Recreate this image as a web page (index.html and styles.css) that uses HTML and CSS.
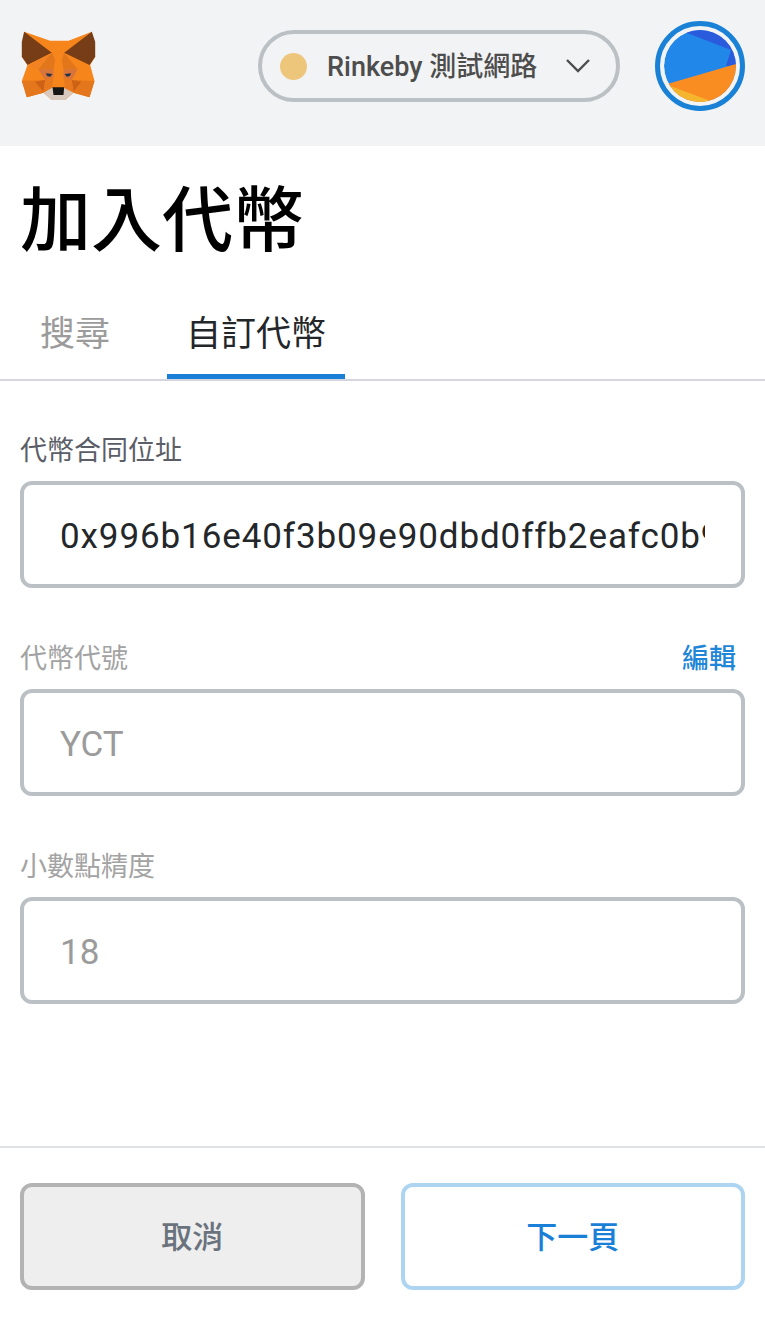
FILE: index.html
```html
<!DOCTYPE html>
<html lang="zh-Hant">
<head>
    <title>加入代幣</title>
    <meta charset="UTF-8">
    <meta name="viewport" content="width=device-width, initial-scale=1.0">
    <link rel="stylesheet" href="styles.css">
</head>
<body>
    <div class="app">
        <div class="app-header">
            <svg class="fox" viewBox="60 90 230 216" width="77" height="72">
                <polygon points="72,95 150,122 205,122 275,95 285,170 270,195 283,243 268,292 220,278 195,300 155,300 130,278 80,292 65,243 82,195 65,170" fill="#f6851b"/>
                <polygon points="72,95 155,158 82,195 65,170 65,125" fill="#763d16"/>
                <polygon points="275,95 192,158 268,195 285,170 285,125" fill="#763d16"/>
                <polygon points="150,122 155,158 115,208 82,195 155,158" fill="#f28222"/>
                <polygon points="155,158 165,180 160,208 115,208" fill="#e2761b"/>
                <polygon points="192,158 185,180 190,208 232,208" fill="#e2761b"/>
                <polygon points="115,208 160,208 160,232 135,240" fill="#d9743a"/>
                <polygon points="232,208 190,208 190,232 215,240" fill="#d9743a"/>
                <polygon points="65,243 135,240 130,278 80,292" fill="#e4761b"/>
                <polygon points="283,243 215,240 220,278 268,292" fill="#e4761b"/>
                <polygon points="105,245 135,240 130,275" fill="#cd6116"/>
                <polygon points="243,245 215,240 220,275" fill="#cd6116"/>
                <polygon points="135,240 160,232 155,265 130,278" fill="#e8791f"/>
                <polygon points="215,240 190,232 195,265 220,278" fill="#e8791f"/>
                <polygon points="137,220 157,222 150,230 141,228" fill="#233447"/>
                <polygon points="213,220 193,222 200,230 209,228" fill="#233447"/>
                <polygon points="155,264 130,278 155,300 195,300 220,278 192,264" fill="#d7c9bd"/>
                <polygon points="157,262 192,262 190,285 160,285" fill="#161616"/>
            </svg>
            <div class="network-pill">
                <span class="network-dot"></span>
                <span class="network-name">Rinkeby 測試網路</span>
                <svg class="caret" viewBox="0 0 26 16" width="26" height="16">
                    <path d="M2 2 L13 13 L24 2" fill="none" stroke="#4d4d4d" stroke-width="2.4"/>
                </svg>
            </div>
            <div class="account-ring">
                <svg class="account-icon" viewBox="0 0 72 72" width="72" height="72">
                    <circle cx="36" cy="36" r="36" fill="#2188ea"/>
                    <polygon points="23,3 23,0 72,0 72,35 62,36 67,20" fill="#2a5bdc"/>
                    <polygon points="0,55 72,34 72,72 0,72" fill="#fa8d22"/>
                    <polygon points="6,56 44,70 44,72 6,72" fill="#f5b52e"/>
                </svg>
            </div>
        </div>

        <div class="page-title">加入代幣</div>

        <div class="tabs">
            <div class="tab">搜尋</div>
            <div class="tab tab-active">自訂代幣</div>
        </div>

        <form class="token-form">
            <div class="field">
                <div class="field-label">
                    <span>代幣合同位址</span>
                </div>
                <input class="field-input field-address" type="text" value="0x996b16e40f3b09e90dbd0ffb2eafc0b9c1d2e3f4">
            </div>
            <div class="field">
                <div class="field-label muted">
                    <span>代幣代號</span>
                    <a class="edit-link">編輯</a>
                </div>
                <input class="field-input" type="text" value="YCT" disabled>
            </div>
            <div class="field">
                <div class="field-label muted">
                    <span>小數點精度</span>
                </div>
                <input class="field-input" type="text" value="18" disabled>
            </div>
        </form>

        <div class="app-footer">
            <button class="btn btn-cancel" type="button">取消</button>
            <button class="btn btn-next" type="button">下一頁</button>
        </div>
    </div>
</body>
</html>
```

FILE: styles.css
```css
* {
    box-sizing: border-box;
}

body {
    margin: 0;
    background-color: #FFFFFF;
    font-family: Roboto, "Noto Sans CJK TC", sans-serif;
}

.app {
    display: flex;
    flex-direction: column;
    height: 1322px;
    overflow: hidden;
}

.app-header {
    display: flex;
    align-items: center;
    height: 146px;
    padding: 0 20px;
    background-color: #F2F3F4;
}

.fox {
    margin-top: -14px;
    flex-shrink: 0;
}

.network-pill {
    display: flex;
    align-items: center;
    width: 362px;
    height: 72px;
    margin-left: 161px;
    margin-top: -14px;
    padding: 0 25px 0 18px;
    border: 4px solid #BBC0C5;
    border-radius: 36px;
}

.network-dot {
    width: 27px;
    height: 27px;
    border-radius: 50%;
    background-color: #EDC67C;
    flex-shrink: 0;
}

.network-name {
    margin-left: 20px;
    padding-bottom: 4px;
    font-size: 27px;
    font-weight: 500;
    color: #4D4D4D;
    white-space: nowrap;
}

.caret {
    margin-left: auto;
    flex-shrink: 0;
}

.account-ring {
    display: flex;
    align-items: center;
    justify-content: center;
    width: 90px;
    height: 90px;
    margin-left: 35px;
    margin-top: -14px;
    border: 5px solid #1A82D6;
    border-radius: 50%;
    flex-shrink: 0;
}

.account-icon {
    border-radius: 50%;
}

.page-title {
    height: 132px;
    padding: 33px 0 0 20px;
    font-size: 71px;
    line-height: 84px;
    font-weight: 500;
    color: #000000;
}

.tabs {
    display: flex;
    height: 103px;
    padding-left: 20px;
    border-bottom: 2px solid #D6D6E0;
}

.tab {
    height: 101px;
    padding: 22px 20px 0;
    font-size: 35px;
    line-height: 70px;
    color: #9B9B9B;
}

.tab + .tab {
    margin-left: 37px;
    padding: 22px 19px 0;
}

.tab-active {
    color: #24272A;
    border-bottom: 5px solid #1A7FD7;
}

.token-form {
    flex: 1;
    padding: 0 20px;
}

.field {
    margin-top: 48px;
}

.field + .field {
    margin-top: 49px;
}

.field-label {
    display: flex;
    justify-content: space-between;
    height: 62px;
    margin-top: -10px;
    font-size: 27px;
    line-height: 64px;
    color: #5B5D67;
}

.field-label.muted {
    color: #A3A3A3;
}

.edit-link {
    padding-right: 9px;
    font-weight: 500;
    color: #1F86D8;
}

.field-input {
    display: block;
    width: 100%;
    height: 107px;
    padding: 4px 36px 0;
    border: 4px solid #BBC0C5;
    border-radius: 12px;
    background-color: #FFFFFF;
    font-family: Roboto, sans-serif;
    font-size: 35px;
    color: #24272A;
}

.field-address {
    letter-spacing: 0.9px;
}

.field-input:disabled {
    color: #9B9B9B;
    -webkit-text-fill-color: #9B9B9B;
    opacity: 1;
}

.app-footer {
    display: flex;
    gap: 36px;
    height: 176px;
    padding: 35px 20px 0;
    border-top: 2px solid #DFE3E6;
}

.btn {
    flex: 1;
    height: 107px;
    padding-bottom: 6px;
    border-radius: 12px;
    font-family: Roboto, "Noto Sans CJK TC", sans-serif;
    font-size: 31px;
    font-weight: 500;
}

.btn-cancel {
    background-color: #EEEEEE;
    border: 4px solid #B3B3B3;
    color: #6A737D;
}

.btn-next {
    background-color: #FFFFFF;
    border: 4px solid #ADD5F2;
    color: #1A7FD7;
}
```
